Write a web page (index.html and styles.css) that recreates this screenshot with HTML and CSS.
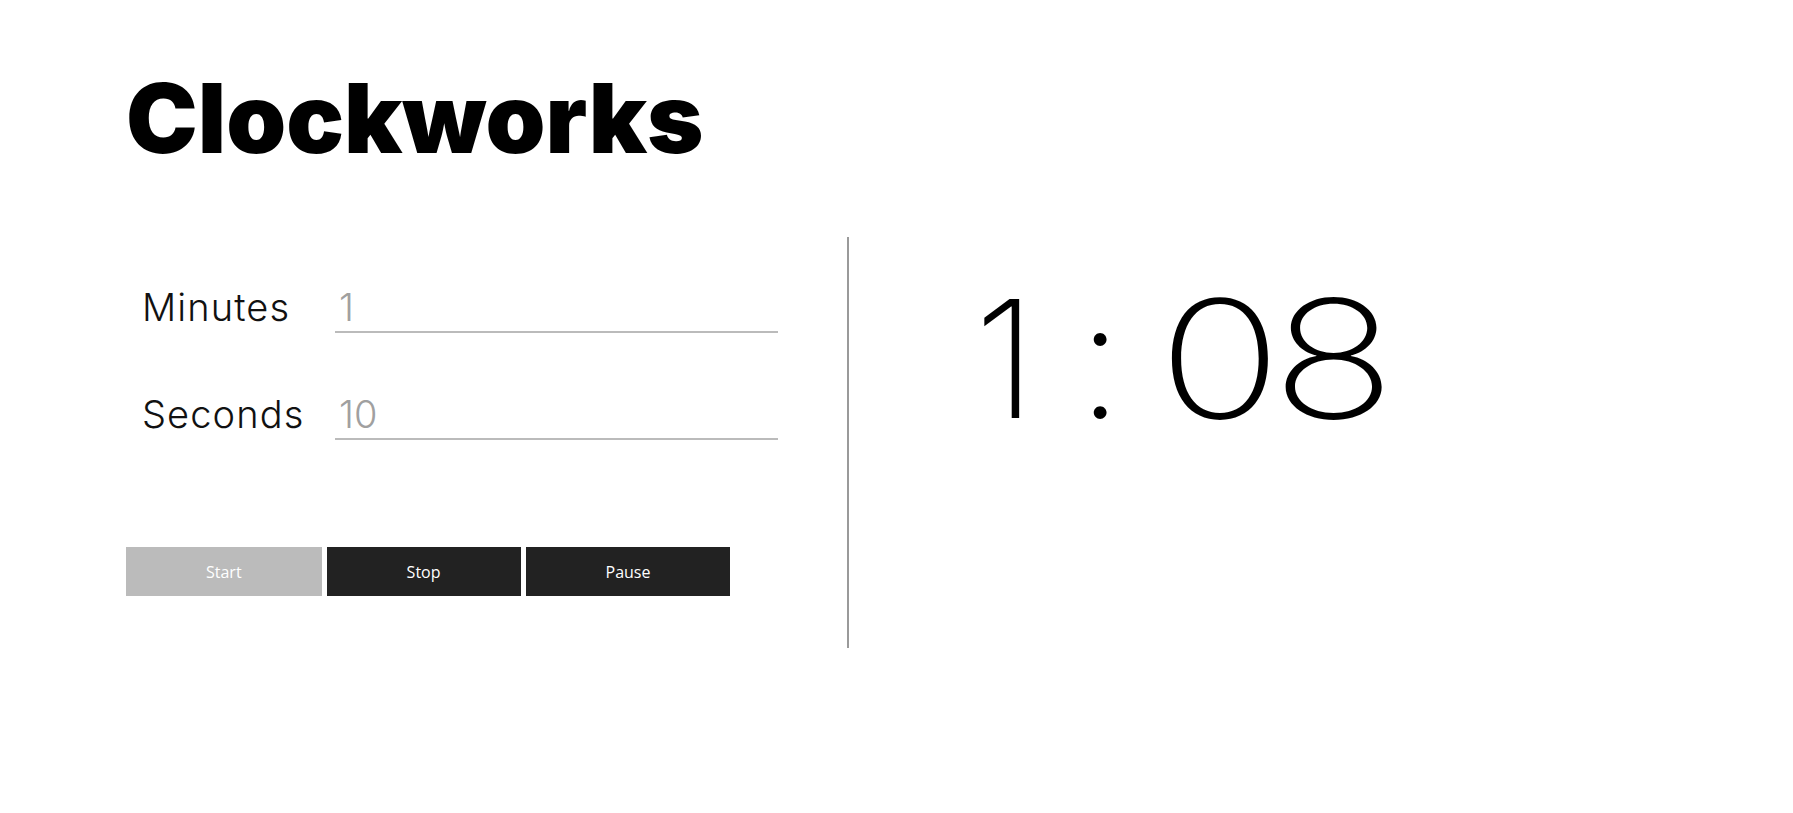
FILE: index.html
```html
<!DOCTYPE html>
<html lang="en">
<head>
<meta charset="utf-8">
<title>Clockworks</title>
<link rel="stylesheet" href="styles.css">
</head>
<body>
<div class="app">
  <h1 class="title">Clockworks</h1>
  <div class="main">
    <section class="controls">
      <div class="fields">
        <label class="row">
          <span class="label">Minutes</span>
          <input class="field" type="text" value="1">
        </label>
        <label class="row">
          <span class="label">Seconds</span>
          <input class="field" type="text" value="10">
        </label>
      </div>
      <div class="buttons">
        <button class="btn btn-disabled">Start</button>
        <button class="btn">Stop</button>
        <button class="btn">Pause</button>
      </div>
    </section>
    <div class="divider"></div>
    <section class="display">
      <div class="time"><span class="mins">1 : </span><span class="secs">08</span></div>
    </section>
  </div>
</div>
</body>
</html>
```
FILE: styles.css
```css
html, body {
  margin: 0;
  padding: 0;
  background: #ffffff;
}

body {
  font-family: "Inter", "Open Sans", sans-serif;
  color: #000;
}

.app {
  padding-left: 126px;
}

.title {
  margin: 0;
  padding-top: 70px;
  font-size: 96px;
  line-height: 1;
  font-weight: 900;
  letter-spacing: 0;
}

.main {
  display: flex;
  margin-top: 71px;
}

.controls {
  width: 721px;
  display: flex;
  flex-direction: column;
}

.fields {
  display: flex;
  flex-direction: column;
  gap: 57px;
  padding-top: 46px;
  padding-left: 16px;
}

.row {
  display: flex;
  align-items: baseline;
}

.label {
  width: 193px;
  font-size: 38px;
  font-weight: 300;
  letter-spacing: 1.1px;
  color: #111;
}

.field {
  width: 435px;
  box-sizing: content-box;
  font-family: "Inter", "Open Sans", sans-serif;
  font-size: 38px;
  font-weight: 300;
  line-height: 48px;
  height: 48px;
  padding: 0 4px;
  margin: 0;
  border: none;
  border-bottom: 2px solid #bbbbbb;
  color: #a0a0a0;
  background: transparent;
  outline: none;
}

.buttons {
  display: flex;
  gap: 5px;
  margin-top: 107px;
}

.btn {
  height: 49px;
  padding: 0 80px;
  border: none;
  background: #222222;
  color: #ffffff;
  font-family: "Open Sans", sans-serif;
  font-size: 16px;
  cursor: pointer;
}

.btn-disabled {
  background: #bbbbbb;
}

.divider {
  width: 2px;
  height: 411px;
  background: #9a9a9a;
}

.display {
  padding-left: 125px;
  padding-top: 40px;
}

.time {
  font-size: 164px;
  line-height: 1;
  font-weight: 200;
  white-space: pre;
}

.mins {
  letter-spacing: 13px;
  word-spacing: -31px;
}

.secs {
  display: inline-block;
  margin-left: -6px;
  letter-spacing: -8px;
  transform: scaleX(1.25);
  transform-origin: left center;
}
```
